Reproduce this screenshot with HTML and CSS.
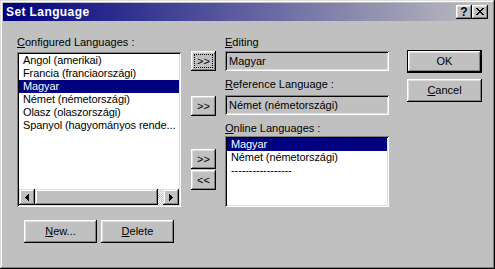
FILE: index.html
```html
<!DOCTYPE html>
<html>
<head>
<meta charset="utf-8">
<link rel="stylesheet" href="styles.css">
</head>
<body>
<div class="window">
  <div class="titlebar">
    <span class="title">Set Language</span>
    <div class="cbtns">
      <div class="cbtn help">?</div>
      <div class="cbtn close">
        <svg width="8" height="7" viewBox="0 0 8 7" shape-rendering="crispEdges"><path d="M0 0h2v1H0zM6 0h2v1H6zM1 1h2v1H1zM5 1h2v1H5zM2 2h4v1H2zM3 3h2v1H3zM2 4h4v1H2zM1 5h2v1H1zM5 5h2v1H5zM0 6h2v1H0zM6 6h2v1H6z" fill="#000"/></svg>
      </div>
    </div>
  </div>
  <div class="content">
    <div class="col1">
      <div class="label"><u>C</u>onfigured Languages :</div>
      <div class="listbox big">
        <div class="items">
          <div class="item">Angol (amerikai)</div>
          <div class="item">Francia (franciaországi)</div>
          <div class="item sel">Magyar</div>
          <div class="item">Német (németországi)</div>
          <div class="item">Olasz (olaszországi)</div>
          <div class="item">Spanyol (hagyományos rende...</div>
        </div>
        <div class="hscroll">
          <div class="sbtn"><svg width="4" height="7" viewBox="0 0 4 7" shape-rendering="crispEdges"><path d="M3 0h1v7H3zM2 1h1v5H2zM1 2h1v3H1zM0 3h1v1H0z" fill="#000"/></svg></div>
          <div class="thumb"></div>
          <div class="track"></div>
          <div class="sbtn"><svg width="4" height="7" viewBox="0 0 4 7" shape-rendering="crispEdges"><path d="M0 0h1v7H0zM1 1h1v5H1zM2 2h1v3H2zM3 3h1v1H3z" fill="#000"/></svg></div>
        </div>
      </div>
      <div class="btnrow">
        <div class="btn wide"><span><u>N</u>ew...</span></div>
        <div class="btn wide"><span><u>D</u>elete</span></div>
      </div>
    </div>
    <div class="col2">
      <div class="btn mbtn b1"><span class="focus">&gt;&gt;</span></div>
      <div class="btn mbtn b2"><span>&gt;&gt;</span></div>
      <div class="btn mbtn b3"><span>&gt;&gt;</span></div>
      <div class="btn mbtn b4"><span>&lt;&lt;</span></div>
    </div>
    <div class="col3">
      <div class="label"><u>E</u>diting</div>
      <div class="field f1">Magyar</div>
      <div class="label l2"><u>R</u>eference Language :</div>
      <div class="field f2">Német (németországi)</div>
      <div class="label l3"><u>O</u>nline Languages :</div>
      <div class="listbox online">
        <div class="items">
          <div class="item sel">Magyar</div>
          <div class="item">Német (németországi)</div>
          <div class="item">-----------------</div>
        </div>
      </div>
    </div>
    <div class="col4">
      <div class="btn wide def"><span>OK</span></div>
      <div class="btn wide cancel"><span><u>C</u>ancel</span></div>
    </div>
  </div>
</div>
</body>
</html>
```
FILE: styles.css
```css
* { box-sizing: border-box; }
body {
  margin: 0;
  font-family: "Liberation Sans", Arial, sans-serif;
  font-size: 11px;
  color: #000;
}
.window {
  width: 495px;
  height: 269px;
  background: #c0c0c0;
  padding: 3px;
  box-shadow: inset -1px -1px #000, inset 1px 1px #dfdfdf, inset -2px -2px #808080, inset 2px 2px #fff;
  display: flex;
  flex-direction: column;
}
.titlebar {
  height: 18px;
  background: linear-gradient(90deg, #000080, #c0c0c0);
  display: flex;
  align-items: center;
  justify-content: space-between;
  padding: 0 4px 0 3px;
}
.title {
  color: #fff;
  font-weight: bold;
  font-size: 12px;
  letter-spacing: 0.4px;
  line-height: 18px;
}
.cbtns { display: flex; }
.cbtn {
  width: 16px;
  height: 14px;
  background: #c0c0c0;
  box-shadow: inset -1px -1px #000, inset 1px 1px #fff, inset -2px -2px #808080, inset 2px 2px #dfdfdf;
  display: flex;
  align-items: center;
  justify-content: center;
}
.cbtn.help { font-weight: bold; font-size: 12px; line-height: 14px; padding-bottom: 1px; }
.cbtn.close svg { display: block; margin-top: -1px; }
.content {
  display: flex;
  padding-left: 14px;
}
.col1 { width: 164px; padding-top: 15px; }
.label { line-height: 13px; height: 13px; white-space: nowrap; }
.listbox {
  background: #fff;
  box-shadow: inset 1px 1px #808080, inset -1px -1px #fff, inset 2px 2px #000, inset -2px -2px #dfdfdf;
  padding: 2px;
  display: flex;
  flex-direction: column;
}
.listbox.big { margin-top: 3px; height: 155px; }
.items { flex: 1; overflow: hidden; }
.item {
  line-height: 13px;
  height: 13px;
  padding-left: 4px;
  white-space: nowrap;
  letter-spacing: -0.1px;
}
.item.sel { background: #000080; color: #fff; }
.hscroll { height: 16px; display: flex; }
.sbtn, .thumb {
  background: #c0c0c0;
  box-shadow: inset -1px -1px #000, inset 1px 1px #dfdfdf, inset -2px -2px #808080, inset 2px 2px #fff;
}
.sbtn {
  width: 16px;
  display: flex;
  align-items: center;
  justify-content: center;
}
.thumb { width: 123px; }
.track {
  flex: 1;
  background-color: #c0c0c0;
  background-image: conic-gradient(#fff 25%, #c0c0c0 0 50%, #fff 0 75%, #c0c0c0 0);
  background-size: 2px 2px;
}
.btn {
  background: #c0c0c0;
  box-shadow: inset -1px -1px #000, inset 1px 1px #fff, inset -2px -2px #808080, inset 2px 2px #dfdfdf;
  display: flex;
  align-items: center;
  justify-content: center;
  line-height: 13px;
}
.btn.wide { width: 73px; height: 23px; }
.btnrow { display: flex; gap: 4px; margin-top: 13px; padding-left: 7px; }
.col2 { width: 25px; margin-left: 10px; display: flex; flex-direction: column; }
.mbtn { width: 25px; height: 20px; }
.b1 { margin-top: 30px; }
.b2 { margin-top: 25px; }
.b3 { margin-top: 33px; }
.b4 { margin-top: 1px; }
.focus {
  border: 1px dotted #000;
  width: 19px;
  height: 14px;
  line-height: 12px;
  text-align: center;
}
.col3 { width: 164px; margin-left: 9px; padding-top: 15px; display: flex; flex-direction: column; }
.field {
  height: 20px;
  background: #c0c0c0;
  box-shadow: inset 1px 1px #808080, inset -1px -1px #fff, inset 2px 2px #000, inset -2px -2px #dfdfdf;
  padding: 2px 2px 2px 4px;
  line-height: 16px;
  white-space: nowrap;
}
.f1 { margin-top: 2px; }
.l2 { margin-top: 7px; }
.f2 { margin-top: 4px; }
.l3 { margin-top: 7px; }
.listbox.online { margin-top: 1px; height: 71px; }
.col4 { width: 75px; margin-left: 18px; padding-top: 29px; display: flex; flex-direction: column; }
.col4 .btn.wide { width: 75px; }
.def {
  box-shadow: inset 0 0 0 1px #000, inset -2px -2px #000, inset 2px 2px #fff, inset -3px -3px #808080, inset 3px 3px #dfdfdf;
}
.cancel { margin-top: 6px; }
```
